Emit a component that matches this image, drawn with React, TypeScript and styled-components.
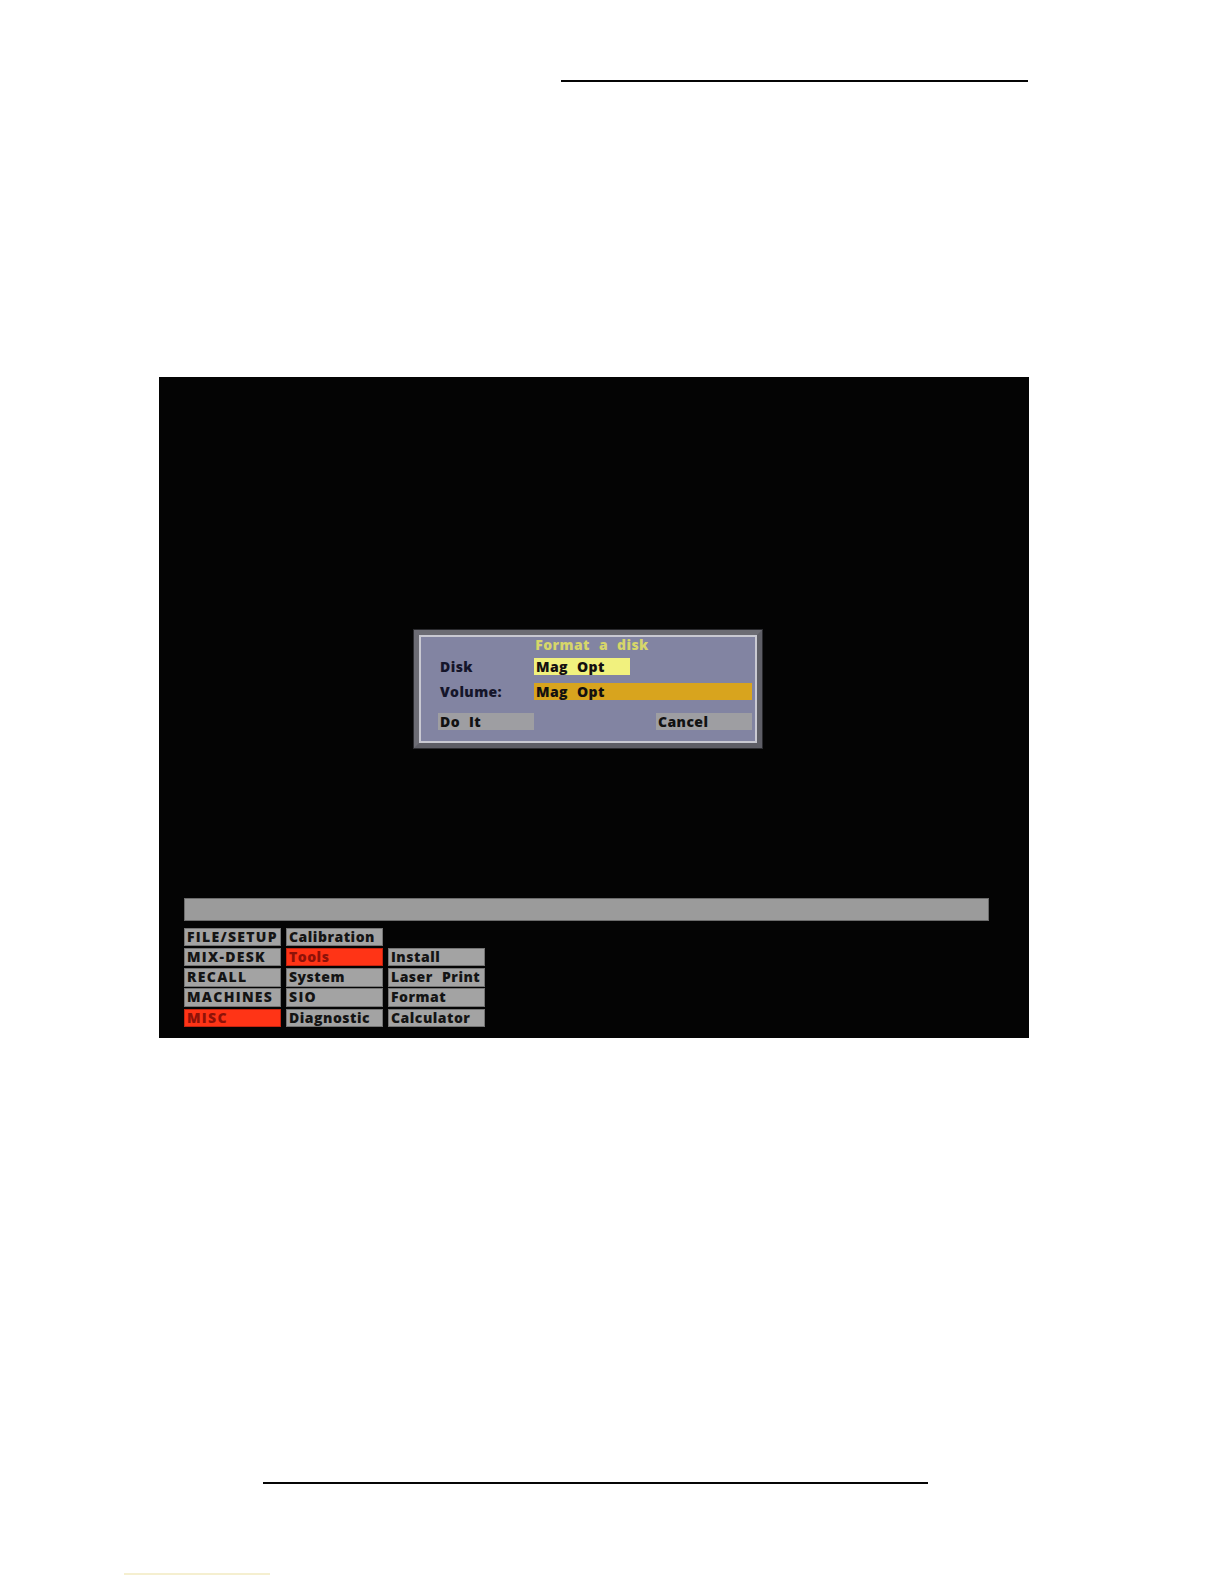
import * as React from "react";
import styled, { createGlobalStyle } from "styled-components";

const GlobalStyle = createGlobalStyle`
  html, body {
    margin: 0;
    padding: 0;
    background: #ffffff;
  }
  body {
    font-family: "Open Sans", "Liberation Sans", sans-serif;
  }
`;

type MenuItem = { label: string; active?: boolean } | null;

const menuRows: MenuItem[][] = [
  [{ label: "FILE/SETUP" }, { label: "Calibration" }, null],
  [{ label: "MIX-DESK" }, { label: "Tools", active: true }, { label: "Install" }],
  [{ label: "RECALL" }, { label: "System" }, { label: "Laser Print" }],
  [{ label: "MACHINES" }, { label: "SIO" }, { label: "Format" }],
  [{ label: "MISC", active: true }, { label: "Diagnostic" }, { label: "Calculator" }],
];

export default function App() {
  return (
    <>
      <GlobalStyle />
      <Page>
        <Rule $top={80} $left={561} $width={467} />
        <Screen>
          <DialogFrame>
            <DialogBody>
              <DialogTitle>Format a disk</DialogTitle>
              <FieldRow $gap={5}>
                <FieldLabel>Disk</FieldLabel>
                <Field $tone="pale" $width={96}>Mag Opt</Field>
              </FieldRow>
              <FieldRow $gap={6}>
                <FieldLabel>Volume:</FieldLabel>
                <Field $tone="amber" $width={218}>Mag Opt</Field>
              </FieldRow>
              <ButtonRow>
                <DialogButton>Do It</DialogButton>
                <DialogButton>Cancel</DialogButton>
              </ButtonRow>
            </DialogBody>
          </DialogFrame>

          <MenuArea>
            <StatusBar />
            <MenuGrid>
              {menuRows.flat().map((item, i) =>
                item ? (
                  <MenuButton
                    key={i}
                    $active={item.active}
                    $caps={item.label === item.label.toUpperCase()}
                  >
                    {item.label}
                  </MenuButton>
                ) : (
                  <span key={i} />
                )
              )}
            </MenuGrid>
          </MenuArea>
        </Screen>
        <Rule $top={444} $left={263} $width={665} />
        <FaintRule />
      </Page>
    </>
  );
}

const Page = styled.div`
  width: 1224px;
  height: 1584px;
  display: flex;
  flex-direction: column;
  overflow: hidden;
`;

const Rule = styled.div<{ $top: number; $left: number; $width: number }>`
  flex: none;
  margin-top: ${(p) => p.$top}px;
  margin-left: ${(p) => p.$left}px;
  width: ${(p) => p.$width}px;
  height: 2px;
  background: #050505;
`;

const FaintRule = styled.div`
  flex: none;
  margin-top: 89px;
  margin-left: 124px;
  width: 146px;
  height: 2px;
  background: #f5efd0;
`;

const Screen = styled.div`
  flex: none;
  box-sizing: border-box;
  margin-top: 295px;
  margin-left: 159px;
  width: 870px;
  height: 661px;
  padding: 253px 0 11px 25px;
  background: #040404;
  display: flex;
  flex-direction: column;
`;

const DialogFrame = styled.div`
  box-sizing: border-box;
  margin-left: 230px;
  width: 348px;
  border: 5px solid #5e5e66;
  border-top-color: #6c6c74;
  border-left-color: #6c6c74;
  box-shadow: 0 0 0 1px #2a2a2e;
`;

const DialogBody = styled.div`
  border: 2px solid #c9c9d2;
  background: #8284a2;
  padding: 0 3px 11px 17px;
  display: flex;
  flex-direction: column;
  font-weight: 800;
  font-size: 14px;
  letter-spacing: 0.4px;
  word-spacing: 5px;
`;

const DialogTitle = styled.div`
  height: 15px;
  line-height: 15px;
  text-align: center;
  color: #d6d66a;
  padding-right: 6px;
`;

const FieldRow = styled.div<{ $gap: number }>`
  display: flex;
  align-items: center;
  margin-top: ${(p) => p.$gap}px;
`;

const FieldLabel = styled.div`
  width: 96px;
  padding-left: 2px;
  box-sizing: border-box;
  color: #15152a;
`;

const Field = styled.div<{ $tone: "pale" | "amber"; $width: number }>`
  box-sizing: border-box;
  width: ${(p) => p.$width}px;
  height: 17px;
  line-height: 17px;
  padding-left: 2px;
  color: #141010;
  background: ${(p) => (p.$tone === "pale" ? "#f1f17e" : "#d8a41e")};
`;

const ButtonRow = styled.div`
  display: flex;
  justify-content: space-between;
  margin-top: 12px;
`;

const DialogButton = styled.div`
  box-sizing: border-box;
  width: 96px;
  height: 17px;
  line-height: 17px;
  padding-left: 2px;
  background: #9e9ea2;
  color: #121212;
`;

const MenuArea = styled.div`
  margin-top: auto;
  display: flex;
  flex-direction: column;
  gap: 7px;
`;

const StatusBar = styled.div`
  box-sizing: border-box;
  width: 805px;
  height: 23px;
  background: #9b9b9b;
  border: 1px solid #6c6c6c;
`;

const MenuGrid = styled.div`
  display: grid;
  grid-template-columns: repeat(3, 97px);
  grid-auto-rows: 18.5px;
  column-gap: 5px;
  row-gap: 1.75px;
`;

const MenuButton = styled.div<{ $active?: boolean; $caps?: boolean }>`
  box-sizing: border-box;
  padding-left: 2px;
  font-size: 14px;
  font-weight: 800;
  line-height: 16.5px;
  letter-spacing: ${(p) => (p.$caps ? "1.3px" : "0.5px")};
  word-spacing: 5px;
  white-space: nowrap;
  overflow: hidden;
  border: 1px solid ${(p) => (p.$active ? "#c42410" : "#747474")};
  background: ${(p) => (p.$active ? "#ff3416" : "#a3a3a3")};
  color: ${(p) => (p.$active ? "#8e1208" : "#141414")};
`;
